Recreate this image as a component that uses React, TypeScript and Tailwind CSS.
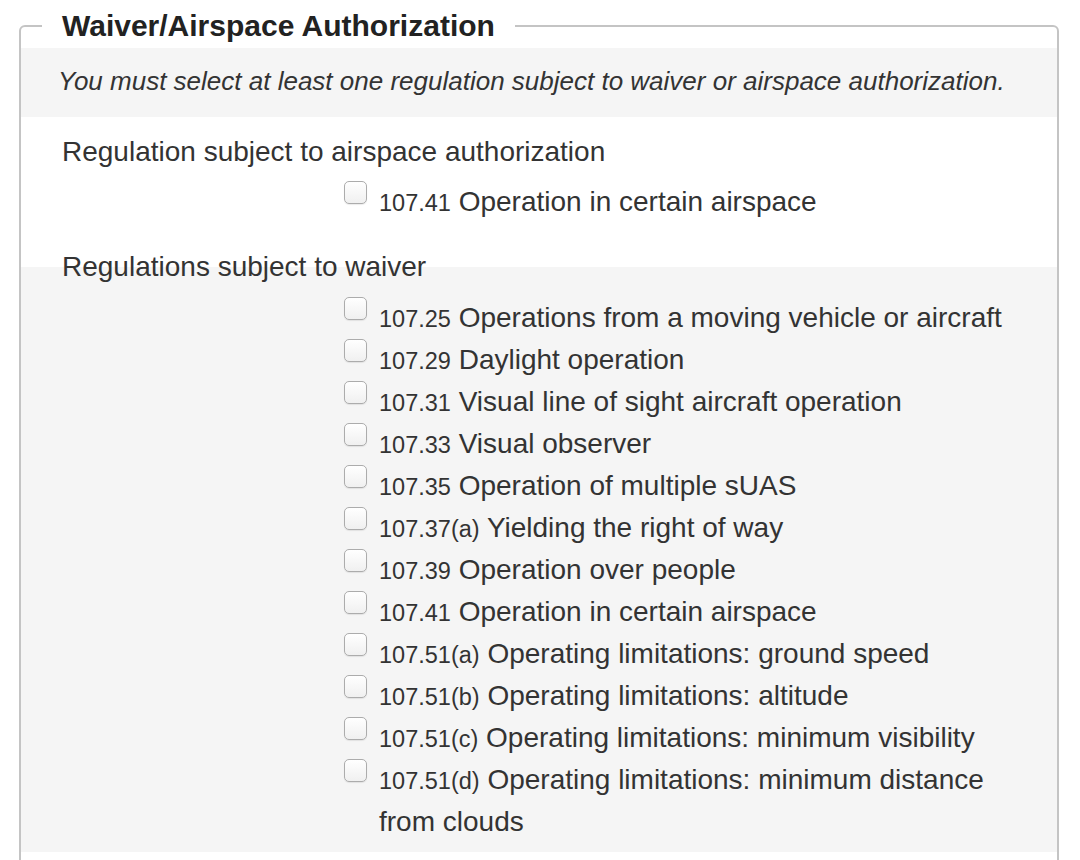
import React from 'react';

type Reg = { code: string; title: string };

const airspaceRegs: Reg[] = [{ code: '107.41', title: 'Operation in certain airspace' }];

const waiverRegs: Reg[] = [
  { code: '107.25', title: 'Operations from a moving vehicle or aircraft' },
  { code: '107.29', title: 'Daylight operation' },
  { code: '107.31', title: 'Visual line of sight aircraft operation' },
  { code: '107.33', title: 'Visual observer' },
  { code: '107.35', title: 'Operation of multiple sUAS' },
  { code: '107.37(a)', title: 'Yielding the right of way' },
  { code: '107.39', title: 'Operation over people' },
  { code: '107.41', title: 'Operation in certain airspace' },
  { code: '107.51(a)', title: 'Operating limitations: ground speed' },
  { code: '107.51(b)', title: 'Operating limitations: altitude' },
  { code: '107.51(c)', title: 'Operating limitations: minimum visibility' },
  { code: '107.51(d)', title: 'Operating limitations: minimum distance from clouds' },
];

function RegCheckbox({ reg }: { reg: Reg }) {
  return (
    <label className="flex items-start gap-[12px] cursor-pointer">
      <span className="w-[23px] h-[23px] shrink-0 rounded-[5px] border border-[#acacac] bg-gradient-to-b from-white to-[#f0f0f0] shadow-[0_1px_1px_rgba(0,0,0,0.08)]" />
      <span className="w-[645px] text-[28px] leading-[42px]">
        <span className="text-[23.5px] leading-none">{reg.code}</span> {reg.title}
      </span>
    </label>
  );
}

export default function App() {
  return (
    <div
      className="bg-white pt-[4px] pl-[19px] w-[1080px] h-[860px] overflow-hidden text-[#333333]"
      style={{ fontFamily: '"Liberation Sans", Arial, sans-serif' }}
    >
      <fieldset className="w-[1040px] min-h-[900px] border-2 border-[#c4c4c4] rounded-[6px]">
        <legend className="ml-[21px] px-[20px] text-[30px] font-bold leading-[44px] text-[#222]">
          Waiver/Airspace Authorization
        </legend>

        {/* notice */}
        <div className="bg-[#f5f5f5] pl-[37px] pt-[15px] pb-[18px]">
          <p className="italic text-[26px] leading-[36px]">
            You must select at least one regulation subject to waiver or airspace authorization.
          </p>
        </div>

        {/* airspace authorization */}
        <div className="pt-[14px] pb-[44px]">
          <div className="pl-[41px] text-[28px] leading-[42px]">Regulation subject to airspace authorization</div>
          <div className="ml-[323px] mt-[8px] flex flex-col">
            {airspaceRegs.map((r) => (
              <RegCheckbox key={r.code} reg={r} />
            ))}
          </div>
        </div>

        {/* waiver */}
        <div className="flex flex-col bg-[#f5f5f5] pb-[9px]">
          <div className="-mt-[21px] pl-[41px] text-[28px] leading-[42px]">Regulations subject to waiver</div>
          <div className="ml-[323px] mt-[9px] flex flex-col">
            {waiverRegs.map((r) => (
              <RegCheckbox key={r.code} reg={r} />
            ))}
          </div>
        </div>
      </fieldset>
    </div>
  );
}
